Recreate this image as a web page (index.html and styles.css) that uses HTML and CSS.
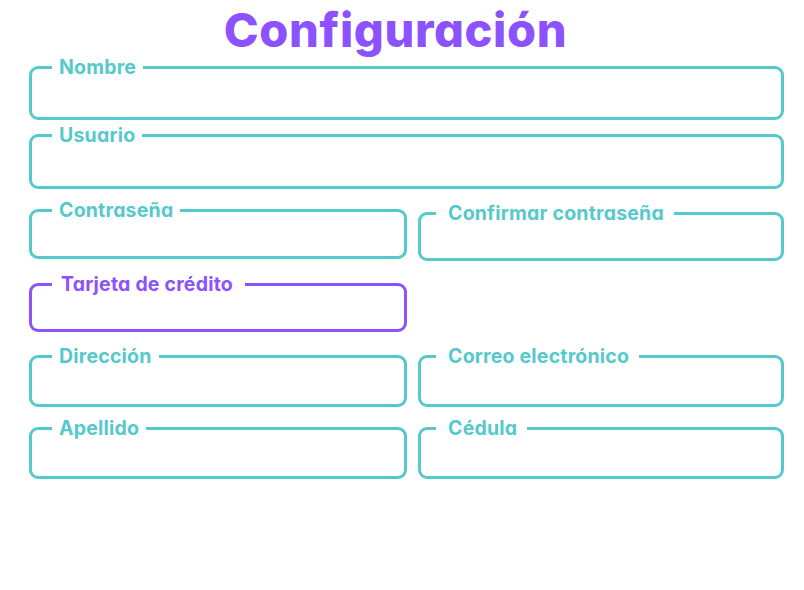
FILE: index.html
```html
<!DOCTYPE html>
<html lang="es">
<head>
<meta charset="utf-8">
<title>Configuración</title>
<link rel="stylesheet" href="styles.css">
</head>
<body>
<main class="page">
  <h1 class="title">Configuración</h1>
  <form class="form">
    <fieldset class="field row-1"><legend class="lbl">Nombre</legend><div class="input tall"></div></fieldset>
    <fieldset class="field row-2"><legend class="lbl">Usuario</legend><div class="input taller"></div></fieldset>
    <div class="pair row-3">
      <fieldset class="field left"><legend class="lbl">Contraseña</legend><div class="input short"></div></fieldset>
      <fieldset class="field right shift"><legend class="lbl">Confirmar contraseña</legend><div class="input shorter"></div></fieldset>
    </div>
    <div class="pair row-4">
      <fieldset class="field left active"><legend class="lbl wide">Tarjeta de crédito</legend><div class="input shorter"></div></fieldset>
    </div>
    <div class="pair row-5">
      <fieldset class="field left"><legend class="lbl">Dirección</legend><div class="input mid"></div></fieldset>
      <fieldset class="field right"><legend class="lbl">Correo electrónico</legend><div class="input mid"></div></fieldset>
    </div>
    <div class="pair row-6">
      <fieldset class="field left"><legend class="lbl">Apellido</legend><div class="input mid"></div></fieldset>
      <fieldset class="field right"><legend class="lbl">Cédula</legend><div class="input mid"></div></fieldset>
    </div>
  </form>
</main>
</body>
</html>
```

FILE: styles.css
```css
* { box-sizing: border-box; }
html, body { margin: 0; padding: 0; background: #ffffff; }
body { font-family: Inter, "Noto Sans", "Liberation Sans", sans-serif; }

.page {
  width: 804px;
  padding: 0 20px 0 29px;
}

.title {
  margin: 6px 0 0 0;
  padding-right: 22px;
  text-align: center;
  font-size: 47px;
  line-height: 47px;
  font-weight: 800;
  color: #8c52ff;
  font-feature-settings: "cv11" 1;
  letter-spacing: 0.6px;
  height: 52px;
}

.form {
  display: flex;
  flex-direction: column;
  width: 755px;
}

.field {
  margin: 0;
  min-width: 0;
  border: 3px solid #55c9cc;
  border-radius: 9px;
  padding: 0 20px 0 20px;
}

.field.active { border-color: #8c52ff; }

.lbl {
  padding: 0 7px;
  font-size: 19.5px;
  line-height: 20px;
  font-weight: 700;
  color: #55c9cc;
  font-feature-settings: "cv11" 1;
  letter-spacing: 0.2px;
}

.lbl.wide { padding: 0 12px 0 9px; }

.active .lbl { color: #8c52ff; }

.input.tall { height: 40px; }
.input.taller { height: 41px; }
.input.short { height: 36px; }
.input.shorter { height: 35px; }
.input.mid { height: 38px; }

.row-1 { margin-top: -1px; }
.row-2 { margin-top: 5px; }
.row-3 { margin-top: 11px; }
.row-4 { margin-top: 13px; }
.row-5 { margin-top: 14px; }
.row-6 { margin-top: 11px; }

.pair {
  display: flex;
  align-items: flex-start;
  gap: 11px;
}

.pair .left { width: 378px; }
.pair .right { width: 366px; padding-left: 15px; }
.pair .right .lbl { padding: 0 10px 0 12px; }
.pair .shift { margin-top: 3px; }
```
